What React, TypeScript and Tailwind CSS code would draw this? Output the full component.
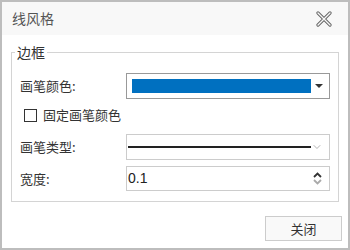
import { ChevronDown } from 'lucide-react';

const font = { fontFamily: '"Noto Sans CJK SC", "Microsoft YaHei", sans-serif' };

function CloseIcon() {
  return (
    <svg width="16" height="16" viewBox="0 0 16 16" className="block">
      <path d="M2 2 L14 14 M14 2 L2 14" stroke="#666" strokeWidth="3.2" strokeLinecap="round" />
      <path d="M2 2 L14 14 M14 2 L2 14" stroke="#f8f8f8" strokeWidth="1.4" strokeLinecap="round" />
    </svg>
  );
}

export default function App() {
  return (
    <div
      className="w-[350px] h-[250px] border-2 border-[#bdbdbd] bg-white flex flex-col text-[13px] text-[#333]"
      style={font}
    >
      {/* Title bar */}
      <div className="h-[33px] bg-[#f8f8f8] flex items-center justify-between pl-[10px] pr-[16px] shrink-0">
        <span className="text-[14px] text-[#555]">线风格</span>
        <CloseIcon />
      </div>

      {/* Group */}
      <fieldset className="mx-[9px] mt-[9px] h-[158px] border border-[#d4d4d4] pl-[8px] pr-[8px] min-w-0">
        <legend className="-ml-[5px] px-[2px] text-[14px] leading-[17px] text-[#333]">边框</legend>

        <div className="flex items-center h-[26px] mt-[12px]">
          <span className="w-[106px]">画笔颜色:</span>
          <div className="w-[204px] h-[26px] border border-[#999] bg-white flex items-center pl-[5px] pr-[6px]">
            <div className="w-[179px] h-[14px] bg-[#0070c0]" />
            <div className="ml-auto w-0 h-0 border-l-[4px] border-r-[4px] border-t-[4px] border-l-transparent border-r-transparent border-t-[#333]" />
          </div>
        </div>

        <div className="flex items-center h-[20px] mt-[6px] pl-[4px]">
          <div className="w-[13px] h-[13px] border border-[#333] bg-white" />
          <span className="ml-[6px]">固定画笔颜色</span>
        </div>

        <div className="flex items-center h-[26px] mt-[9px]">
          <span className="w-[106px]">画笔类型:</span>
          <div className="w-[204px] h-[26px] border border-[#ccc] bg-white flex items-center pl-[1px] pr-[6px]">
            <div className="w-[184px] h-[1.5px] bg-[#222]" />
            <ChevronDown className="ml-auto w-[12px] h-[12px] text-[#999]" strokeWidth={1.5} />
          </div>
        </div>

        <div className="flex items-center h-[25px] mt-[6px]">
          <span className="w-[106px]">宽度:</span>
          <div className="w-[204px] h-[25px] border border-[#ccc] bg-white flex items-center pl-[1px] pr-[7px]">
            <span className="text-[14px] text-[#222]" style={{ fontFamily: '"Liberation Sans", Arial, sans-serif' }}>0.1</span>
            <div className="ml-auto flex flex-col items-center gap-[1px]">
              <svg width="9" height="6" viewBox="0 0 9 6">
                <path d="M1 5 L4.5 1.5 L8 5" fill="none" stroke="#333" strokeWidth="1.8" />
              </svg>
              <svg width="9" height="6" viewBox="0 0 9 6">
                <path d="M1 1 L4.5 4.5 L8 1" fill="none" stroke="#aaa" strokeWidth="1.8" />
              </svg>
            </div>
          </div>
        </div>
      </fieldset>

      <div className="flex-1 flex items-end justify-end pr-[6px] pb-[7px]">
        <button className="w-[77px] h-[25px] border border-[#ccc] bg-[#f9f9f9] text-[13px] text-[#333] flex items-center justify-center">
          关闭
        </button>
      </div>
    </div>
  );
}
